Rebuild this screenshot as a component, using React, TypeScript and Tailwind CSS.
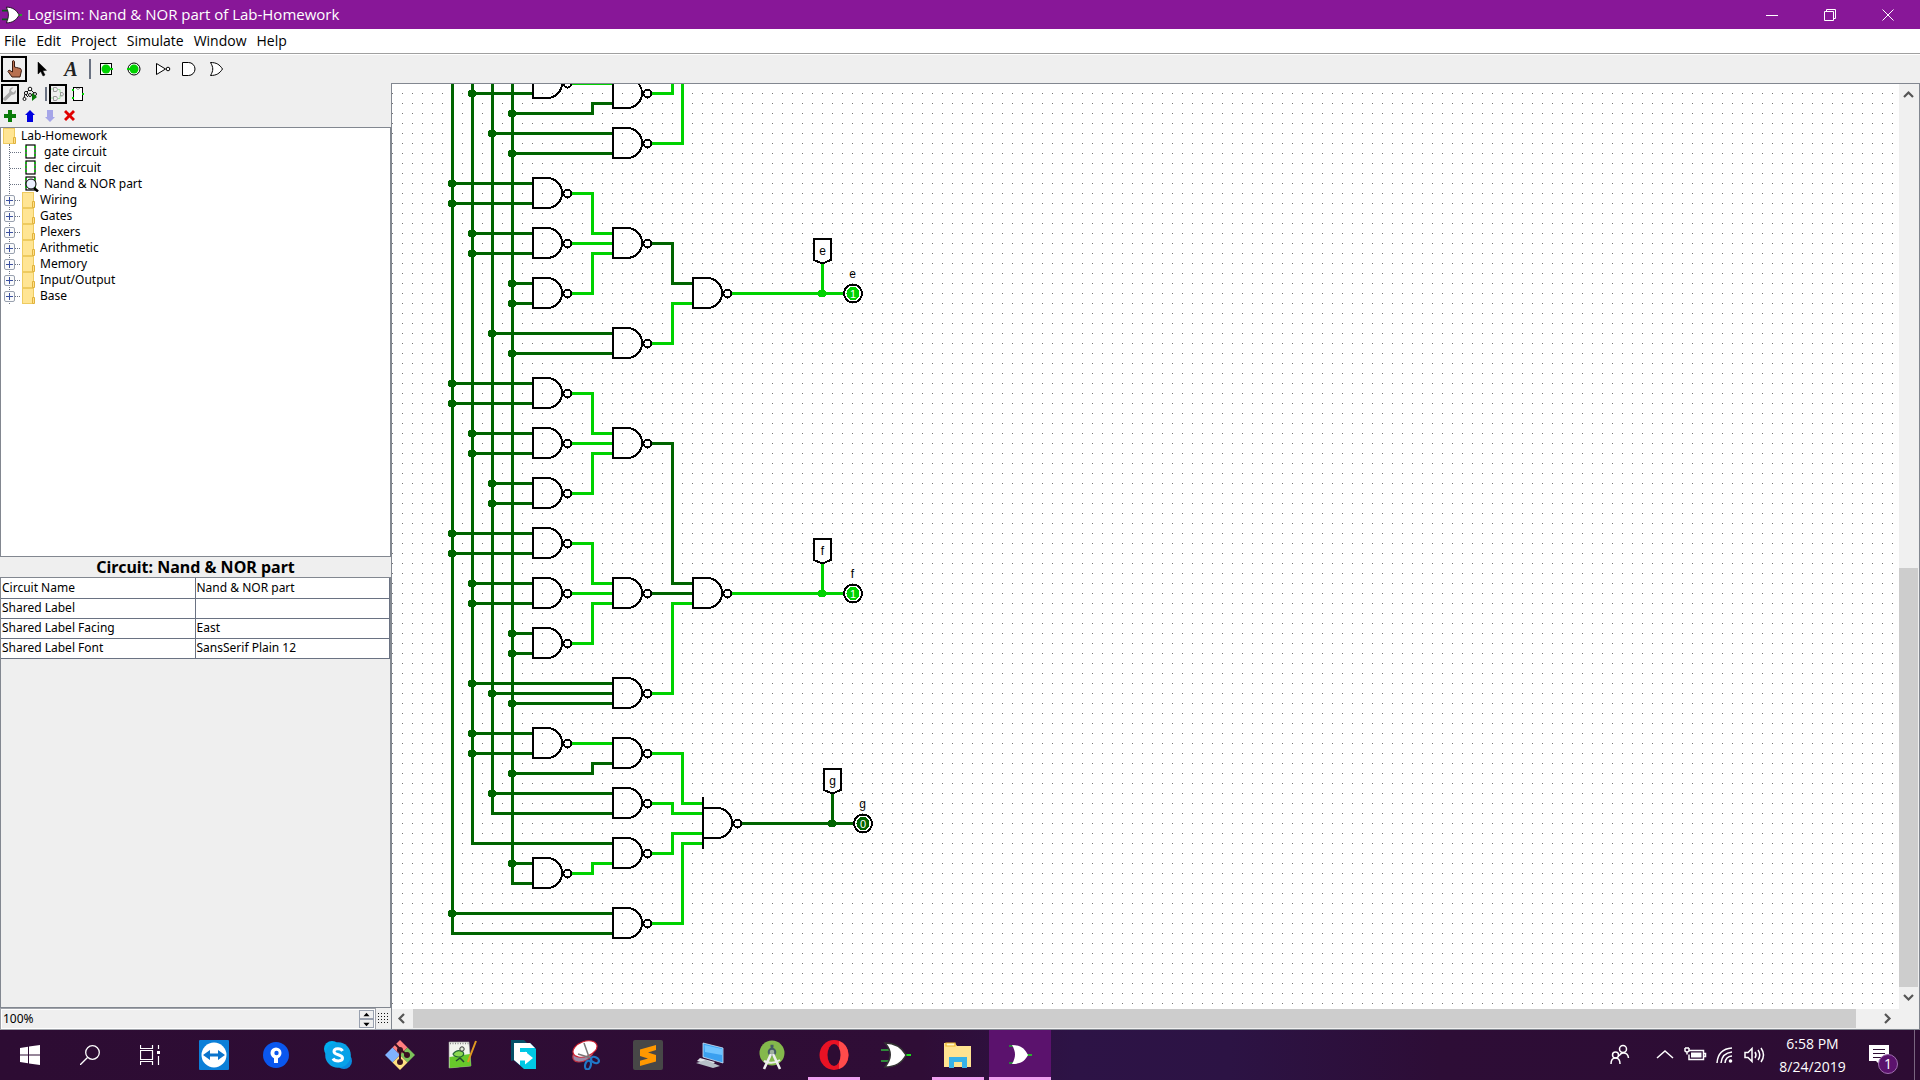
import React from "react";

type Gate = { x: number; y: number; tall?: boolean };

const DARK = "#006400";
const LIGHT = "#00d200";

const gates: Gate[] = [
  ...[83, 193, 243, 293, 393, 443, 493, 543, 593, 643, 743, 873].map((y) => ({ x: 533, y })),
  ...[93, 143, 243, 343, 443, 593, 693, 753, 803, 853, 923].map((y) => ({ x: 613, y })),
  { x: 693, y: 293 },
  { x: 693, y: 593 },
  { x: 703, y: 823, tall: true },
];

const taps: [number, number, number][] = [
  [472, 93, 532], [492, 133, 612], [512, 153, 612],
  [452, 183, 532], [452, 203, 532], [472, 233, 532], [472, 253, 532],
  [512, 283, 532], [512, 303, 532], [492, 333, 612], [512, 353, 612],
  [452, 383, 532], [452, 403, 532], [472, 433, 532], [472, 453, 532],
  [492, 483, 532], [492, 503, 532], [452, 533, 532], [452, 553, 532],
  [472, 583, 532], [472, 603, 532], [512, 633, 532], [512, 653, 532],
  [472, 683, 612], [492, 693, 612], [512, 703, 612],
  [472, 733, 532], [472, 753, 532], [492, 793, 612],
  [512, 863, 532], [452, 913, 612],
];

const darkWires = [
  "M452 70V933H612", "M472 70V843H612", "M492 70V813H612", "M512 70V883H532",
  "M512 113H592V103H612", "M512 773H592V763H612",
  "M652 243H672V283H692", "M652 443H672V583H692", "M652 593H692",
  "M742 823H853M832 823V793",
];

const lightWires = [
  "M572 83H612", "M652 93H672V70", "M652 143H682V70",
  "M572 193H592V233H612", "M572 243H612", "M572 293H592V253H612", "M652 343H672V303H692",
  "M732 293H843M822 293V263",
  "M572 393H592V433H612", "M572 443H612", "M572 493H592V453H612",
  "M572 543H592V583H612", "M572 593H612", "M572 643H592V603H612",
  "M652 693H672V603H692", "M732 593H843M822 593V563",
  "M572 743H612", "M652 753H682V803H702", "M652 803H672V813H702",
  "M652 853H672V833H702", "M652 923H682V843H702", "M572 873H592V863H612",
];

const outputs = [
  { x: 822, y: 293, name: "e", on: true },
  { x: 822, y: 593, name: "f", on: true },
  { x: 832, y: 823, name: "g", on: false },
];

function Circuit() {
  return (
    <svg className="block h-full w-full" role="img" aria-label="Nand & NOR part circuit" shapeRendering="crispEdges" fontFamily="'Liberation Sans', Arial, sans-serif">
      <defs>
        <pattern id="dots" x="0" y="9" width="10" height="10" patternUnits="userSpaceOnUse">
          <rect width="1" height="1" fill="#777777" />
        </pattern>
      </defs>
      <rect width="100%" height="100%" fill="url(#dots)" />
      <g transform="translate(-392 -84)">
        <g transform="translate(0.5 0.5)" fill="none" strokeWidth="3" strokeLinecap="square">
          <g stroke={DARK}>
            {darkWires.map((d) => <path key={d} d={d} />)}
            {taps.map(([x, y, to]) => <path key={`${x}-${y}`} d={`M${x} ${y}H${to}`} />)}
          </g>
          <g stroke={LIGHT}>
            {lightWires.map((d) => <path key={d} d={d} />)}
          </g>
        </g>
        <g fill={DARK}>
          {taps.map(([x, y]) => <circle key={`${x}-${y}`} cx={x} cy={y + 0.5} r="4" />)}
          <circle cx="512" cy="113.5" r="4" />
          <circle cx="512" cy="773.5" r="4" />
        </g>
        <g fill="none" stroke="#000" strokeWidth="2">
          {gates.map(({ x, y, tall }) => (
            <g key={`${x}-${y}`}>
              <path d={`M${x + 14} ${y - 15}H${x}V${y + 15}H${x + 14}A15 15 0 0 0 ${x + 14} ${y - 15}Z`} />
              {tall && <path d={`M${x} ${y - 26}V${y + 26}`} />}
              <circle cx={x + 34.5} cy={y + 0.5} r="4" fill="#fff" />
            </g>
          ))}
        </g>
        {outputs.map(({ x, y, name, on }) => (
          <g key={name}>
            <circle cx={x} cy={y + 0.5} r="4" fill={on ? LIGHT : DARK} />
            <path d={`M${x - 8} ${y - 54}H${x + 8.5}V${y - 33}L${x + 2} ${y - 30}H${x - 1}L${x - 8} ${y - 33}Z`} fill="#fff" stroke="#000" strokeWidth="2" />
            <text x={x + 0.5} y={y - 38} fontSize="12" textAnchor="middle">{name}</text>
            <text x={x + 30.5} y={y - 15} fontSize="12" textAnchor="middle">{name}</text>
            <circle cx={x + 31} cy={y + 0.5} r="9" fill="#fff" stroke="#000" strokeWidth="2" />
            <circle cx={x + 31} cy={y + 0.5} r="6.5" fill={on ? LIGHT : DARK} />
            <text x={x + 31} y={y + 5} fontSize="11" textAnchor="middle" fill="#fff">{on ? "1" : "0"}</text>
          </g>
        ))}
      </g>
    </svg>
  );
}

function Folder() {
  return (
    <svg className="block h-4 w-[14px] shrink-0" viewBox="0 0 14 16">
      <rect x="0.5" y="0.5" width="11" height="15" fill="#ffe594" stroke="#eecb60" />
      <path d="M10.5 9.5h2v6h-2z" fill="#ffe08a" stroke="#e0b23c" />
    </svg>
  );
}

function Chip({ current }: { current?: boolean }) {
  return (
    <svg className="block h-4 w-4 shrink-0" viewBox="0 0 16 16">
      <rect x="2" y="1" width="9" height="13" fill="#fff" stroke="#000" strokeWidth="1.2" />
      <path d="M1 3h2M1 7h2M1 11h2M10 3h2M10 7h2M10 11h2" stroke="#00c800" strokeWidth="1.4" />
      {current && (
        <>
          <circle cx="7" cy="8" r="5" fill="#eaf0ff" stroke="#000" />
          <path d="M10 12l4 3.5" stroke="#000" strokeWidth="2.5" />
        </>
      )}
    </svg>
  );
}

function OrIcon({ className }: { className: string }) {
  return (
    <svg className={className} viewBox="0 0 28 28">
      <path d="M0 8h9M0 20h9" stroke="#0a5a1a" strokeWidth="2.5" />
      <path d="M23 14h5" stroke="#00d200" strokeWidth="2" />
      <path d="M6 3c9 0 14 4 18 11-4 7-9 11-18 11 4-8 4-14 0-22z" fill="#fff" stroke="#111" strokeWidth="1.2" />
    </svg>
  );
}

const menus = ["File", "Edit", "Project", "Simulate", "Window", "Help"];
const circuits = ["gate circuit", "dec circuit", "Nand & NOR part"];
const libraries = ["Wiring", "Gates", "Plexers", "Arithmetic", "Memory", "Input/Output", "Base"];
const attributes = [
  ["Circuit Name", "Nand & NOR part"],
  ["Shared Label", ""],
  ["Shared Label Facing", "East"],
  ["Shared Label Font", "SansSerif Plain 12"],
];

const tools = [
  { name: "Edit tool", icon: <path d="M9 7v12l2.800-2.500 2.200 4.500 2-1-2.200-4.300 3.700-.4z" fill="#000" stroke="#000" strokeWidth=".5" /> },
  { name: "Text tool", icon: <text x="14" y="21" fontSize="20" fontWeight="bold" fontStyle="italic" textAnchor="middle" fontFamily="'Liberation Serif', serif" fill="#222">A</text> },
];

const gateTools = [
  { name: "Input pin", icon: <><rect x="8.500" y="8.500" width="11" height="11" fill="#fff" stroke="#000" /><circle cx="14" cy="14" r="4.500" fill={LIGHT} /><path d="M17 14h4" stroke={LIGHT} strokeWidth="2" /></> },
  { name: "Output pin", icon: <><circle cx="14" cy="14" r="6" fill="#fff" stroke="#000" /><circle cx="14" cy="14" r="4.500" fill={LIGHT} /><path d="M7 14h4" stroke={LIGHT} strokeWidth="2" /></> },
  { name: "NOT gate", icon: <><path d="M8.500 8.500v11l9-5.500z" fill="#fff" stroke="#000" /><circle cx="20" cy="14" r="1.800" fill="#fff" stroke="#000" /></> },
  { name: "AND gate", icon: <path d="M6.500 7.500h6a6.500 6.500 0 0 1 0 13h-6z" fill="#fff" stroke="#000" /> },
  { name: "OR gate", icon: <path d="M6.500 7.500c6 0 9 2 12 6.500-3 4.500-6 6.500-12 6.500 3-5 3-8 0-13z" fill="#fff" stroke="#000" /> },
];

function ToolButton({ name, children }: { name: string; children: React.ReactNode }) {
  return (
    <button aria-label={name} className="h-7 w-7 shrink-0">
      <svg className="block h-7 w-7" viewBox="0 0 28 28">{children}</svg>
    </button>
  );
}

function Explorer() {
  return (
    <aside className="flex w-[391px] shrink-0 flex-col pt-px text-[12px]">
      <div className="flex h-[21px] items-start pl-px">
        <button aria-label="Show toolbox" className="h-5 w-[18px] border-2 border-black">
          <svg className="block h-4 w-[14px]" viewBox="0 0 14 16"><path d="M2 13l6-6" stroke="#aaa" strokeWidth="3.500" strokeLinecap="round" /><path d="M13 4l-2.500 2.500-2-.5-.5-2L10.500 1.500C7 1 5.500 4 6.500 6.500l2 2c3 1 5-1.500 4.500-4.500z" fill="#aaa" /></svg>
        </button>
        <button aria-label="Show simulation tree" className="ml-[3px] h-5 w-4">
          <svg className="block h-5 w-4" viewBox="0 0 16 20"><g fill="#fff" stroke="#111"><path d="M8 5L3 10l-1 4M8 5l5 5M3 10l3 3" /><circle cx="8" cy="5" r="1.800" /><circle cx="4" cy="9" r="1.600" /><circle cx="2.500" cy="15" r="1.500" /><circle cx="8" cy="11" r="1.500" /><circle cx="13" cy="10" r="1.500" /></g><path d="M10 9v8l5-4z" fill="#087a08" /></svg>
        </button>
        <span className="mt-[3px] ml-[7px] h-[14px] w-[2px] bg-gray-500" />
        <button aria-label="Edit layout" className="ml-[2px] h-5 w-[18px] border-2 border-black">
          <svg className="block h-4 w-[14px]" viewBox="0 0 14 16" fill="none"><path d="M7 3.500h2v3h2M7 12.500h2v-3h2M0 3h3M0 12h3" stroke="#9be09b" /><path d="M2.500 1.500h3q2 2 0 4h-3zM2.500 10.500h3q2 2 0 4h-3zM9.500 6.500h2q2 1.500 0 3.500h-2z" stroke="#999" /></svg>
        </button>
        <button aria-label="Edit appearance" className="ml-[3px] h-5 w-4">
          <svg className="block h-5 w-4" viewBox="0 0 16 20"><rect x="3.500" y="3.500" width="9" height="13" fill="#fff" stroke="#000" /><path d="M6 4q2 3 4 0" fill="none" stroke="#888" /><path d="M2 6h2M2 14h2M12 10h2" stroke={LIGHT} strokeWidth="1.800" /></svg>
        </button>
      </div>
      <div className="flex h-[22px] items-center">
        {[
          { name: "Add circuit", d: "M8 4h4v4h4v4h-4v4H8v-4H4V8h4z", c: "#087a08" },
          { name: "Move circuit up", d: "M10 4l5 5h-2v7H7V9H5z", c: "#0000e0" },
          { name: "Move circuit down", d: "M10 16l5-5h-2V4H7v7H5z", c: "#a5a5e8" },
          { name: "Remove circuit", d: "M4 6l2-2 3.500 3.500L13 4l2 2-3.500 3.500L15 13l-2 2-3.500-3.500L6 15l-2-2 3.500-3.500z", c: "#e00000" },
        ].map((b) => (
          <button key={b.name} aria-label={b.name} className="h-5 w-5">
            <svg className="block h-5 w-5" viewBox="0 0 20 20"><path d={b.d} fill={b.c} /></svg>
          </button>
        ))}
      </div>

      <div className="flex-[429] basis-0 overflow-hidden border border-[#828790] bg-white">
        <div className="flex h-4 items-center pl-[2px]">
          <Folder />
          <span className="ml-1 leading-4">Lab-Homework</span>
        </div>
        <ul className="ml-2 border-l border-dotted border-gray-500">
          {circuits.map((c, i) => (
            <li key={c} className="flex h-4 items-center">
              <span className="w-[11px] border-t border-dotted border-gray-500" />
              <span className="ml-[3px]"><Chip current={i === 2} /></span>
              <span className="ml-1 leading-4">{c}</span>
            </li>
          ))}
          {libraries.map((l) => (
            <li key={l} className="flex h-4 items-center">
              <button aria-label={`Expand ${l}`} className="-ml-[6px] h-[11px] w-[11px] shrink-0 rounded-[2px] border border-gray-400 bg-gray-50">
                <svg className="block h-[9px] w-[9px]" viewBox="0 0 9 9"><path d="M1 4.500h7M4.500 1v7" stroke="#3a50a0" /></svg>
              </button>
              <span className="w-[5px] border-t border-dotted border-gray-500" />
              <span className="ml-[2px]"><Folder /></span>
              <span className="ml-1 leading-4">{l}</span>
            </li>
          ))}
        </ul>
      </div>

      <div className="flex flex-[452] basis-0 flex-col">
        <h2 className="h-5 text-center text-[16px] leading-5 font-bold">Circuit: Nand &amp; NOR part</h2>
        <div className="flex-1 border border-[#828790]">
          <table className="w-full table-fixed border-collapse bg-white">
            <tbody>
              {attributes.map(([k, v]) => (
                <tr key={k} className="h-5 border-b border-gray-500">
                  <th scope="row" className="w-[194px] border-r border-gray-500 p-0 pl-px text-left leading-[18px] font-normal">{k}</th>
                  <td className="border-r border-gray-500 p-0 pl-px leading-[18px]">{v}</td>
                </tr>
              ))}
            </tbody>
          </table>
        </div>
      </div>

      <div className="flex h-[22px] shrink-0">
        <div className="flex h-[22px] flex-1 border border-[#a0a3aa] bg-white p-px">
          <input aria-label="Zoom" defaultValue="100%" className="min-w-0 flex-1 bg-[#efefef] pl-px" />
          <div className="flex w-[15px] flex-col">
            {["M3.500 6h7L7 2z", "M3.500 3h7L7 7z"].map((d, i) => (
              <button key={d} aria-label={i ? "Zoom out" : "Zoom in"} className="flex-1 border border-gray-400 bg-[#efefef]">
                <svg className="block h-[7px] w-[13px]" viewBox="0 0 14 8"><path d={d} /></svg>
              </button>
            ))}
          </div>
        </div>
        <button aria-label="Show grid" className="w-[15px] border-b border-gray-400">
          <svg className="block h-[21px] w-[15px]" viewBox="0 0 15 21">
            <path d="M2 5.500h11M2 8.500h11M2 11.500h11M2 14.500h11" stroke="#111" strokeDasharray="1 2" />
          </svg>
        </button>
      </div>
    </aside>
  );
}

function ScrollArrow({ name, d }: { name: string; d: string }) {
  return (
    <button aria-label={name} className="h-5 w-5 shrink-0">
      <svg className="block h-5 w-5" viewBox="0 0 20 20" fill="none" stroke="#555" strokeWidth="2.200"><path d={d} /></svg>
    </button>
  );
}

function Canvas() {
  return (
    <main className="flex min-w-0 flex-1 flex-col border border-[#828790]">
      <div className="flex min-h-0 flex-1">
        <div className="min-w-0 flex-1 overflow-hidden bg-white"><Circuit /></div>
        <div className="flex w-5 flex-col bg-[#f0f0f0]">
          <ScrollArrow name="Scroll up" d="M5 13l4.500-4.500L14 13" />
          <div className="flex-[464]" />
          <div className="w-[19px] flex-[419] bg-[#cdcdcd]" />
          <div className="flex-[2]" />
          <ScrollArrow name="Scroll down" d="M5 6l4.500 4.500L14 6" />
        </div>
      </div>
      <div className="flex h-5 bg-[#f0f0f0]">
        <ScrollArrow name="Scroll left" d="M12 5L7.500 9.500L12 14" />
        <div className="ml-px h-[19px] flex-[1443] bg-[#cdcdcd]" />
        <div className="flex-[23]" />
        <ScrollArrow name="Scroll right" d="M6 5l4.500 4.500L6 14" />
        <div className="w-5" />
      </div>
    </main>
  );
}

const apps: { name: string; open?: boolean; active?: boolean; icon: React.ReactNode }[] = [
  { name: "TeamViewer", icon: <><rect width="30" height="30" rx="1" fill="#0b7fd8" /><circle cx="15" cy="15" r="12.500" fill="#fff" /><path d="M4 15l7-5v3.500h8V10l7 5-7 5v-3.500h-8V20z" fill="#0b74cc" /></> },
  { name: "Map pin", icon: <><circle cx="15" cy="15" r="13" fill="#0a57ee" /><circle cx="15" cy="13" r="5.500" fill="#fff" /><path d="M13 16h4v7h-4z" fill="#fff" /><circle cx="15.500" cy="13" r="2.200" fill="#0a57ee" /></> },
  { name: "Skype", icon: <><circle cx="9" cy="9" r="8" fill="#00aff0" /><circle cx="21" cy="21" r="8" fill="#0a8ade" /><circle cx="15" cy="15" r="12.800" fill="#08a2e8" /><path d="M19.500 11c-1.500-3-8.500-3-8.500.5 0 4 8.500 2.500 8.500 6.500 0 4-8 3.500-9.500.5" fill="none" stroke="#fff" strokeWidth="3" /></> },
  { name: "Git", icon: <><path d="M15 0l7.500 7.500L15 15 7.500 7.500z" fill="#ff7f7f" /><path d="M7.500 7.500L15 15l-7.500 7.500L0 15z" fill="#80b3ff" /><path d="M22.500 7.500L30 15l-7.500 7.500L15 15z" fill="#7cc35a" /><path d="M15 15l7.500 7.500L15 30l-7.500-7.500z" fill="#ffe080" /><path d="M10 4l5 5v13M15 9l7 6" stroke="#3a1020" strokeWidth="2" fill="none" /><circle cx="15" cy="10" r="3" fill="#3a1020" /><circle cx="22" cy="15" r="3" fill="#3a1020" /><circle cx="15" cy="22" r="3" fill="#3a1020" /></> },
  { name: "Notepad++", icon: <><path d="M2 2h20l2 24-22 2z" fill="#f2f4ee" stroke="#999" strokeWidth=".6" /><path d="M2.500 17l20.500-3 1 12-21.500 2z" fill="#67c92a" /><path d="M3 3.500h19" stroke="#888" strokeDasharray="1 1.500" strokeWidth="1.500" /><path d="M6 14c3-4 7-4 10-2 2 3-1 5-4 5-3 0-5-1-6-3z" fill="#8bd850" stroke="#263" strokeWidth="1.200" /><circle cx="15" cy="9" r="2.200" fill="#e0ead8" stroke="#333" /><path d="M9 21l4-3 4 4" stroke="#243" fill="none" strokeWidth="1.500" /><path d="M29 1l-7 18-1 3" stroke="#e09a20" strokeWidth="2" fill="none" /></> },
  { name: "File transfer", icon: <><path d="M2 0h13l6 6v10L2 21z" fill="#045068" /><path d="M5 3h16l6 6v20H15L5 20z" fill="#00c8e4" /><path d="M5 3h16l5 5H11v4h7v5h-7v8l-6-5z" fill="#fff" /><path d="M10 15.500h6v-4l8 6.500-8 6.500v-4h-6z" fill="#fff" /></> },
  { name: "Snipping Tool", icon: <><ellipse cx="12" cy="14" rx="11" ry="7" fill="#9a8ca8" stroke="#c03040" transform="rotate(-28 12 14)" /><ellipse cx="14" cy="9" rx="12.500" ry="7.500" fill="#fff" stroke="#d02030" strokeWidth="1.200" transform="rotate(-20 14 9)" /><path d="M13 3l5 14M7 14l13 4" stroke="#777" strokeWidth="1.500" /><ellipse cx="17" cy="25" rx="2.800" ry="4.500" fill="none" stroke="#2078c8" strokeWidth="2.200" transform="rotate(15 17 25)" /><ellipse cx="24" cy="20" rx="4.200" ry="2.800" fill="none" stroke="#2078c8" strokeWidth="2.200" transform="rotate(25 24 20)" /></> },
  { name: "Sublime Text", icon: <><rect width="30" height="30" rx="2" fill="#474747" /><path d="M23 5L7 9.500V16l8 2.500-8 2.300V26l16-4.500V15l-8-2.500L23 10z" fill="#ff9800" /></> },
  { name: "Remote Desktop", icon: <><path d="M8 3l20 5v15L8 17z" fill="#3aa0f0" stroke="#cfe6fa" strokeWidth=".8" /><path d="M9.500 5L27 9v6L10 12z" fill="#70c4ff" /><path d="M5 18l15 4-3 3-15-4z" fill="#dfe4e8" /><path d="M1 23l17 5 7-2-14-6z" fill="#b8c0c8" /></> },
  { name: "Android Studio", icon: <><circle cx="15" cy="13" r="12.500" fill="#84b84c" /><path d="M15 5v6M13.500 6h3" stroke="#455a64" strokeWidth="2.500" /><circle cx="15" cy="12" r="3.300" fill="#9fb0a0" stroke="#455a64" strokeWidth="2" /><path d="M14 14L7 29M16 14l7 15" stroke="#eee" strokeWidth="2.600" /><path d="M7 21q8 4 16-1" fill="none" stroke="#eee" strokeWidth="2" /></> },
  { name: "Opera", open: true, icon: <><ellipse cx="15" cy="15" rx="14.500" ry="15" fill="#e81224" /><path d="M20 1q9 3 9.500 14-.5 11-9.500 14z" fill="#ff4b4b" /><ellipse cx="15" cy="15" rx="6.500" ry="11" fill="#2d0c33" /></> },
  { name: "Logisim shortcut", icon: <><path d="M0 10h10M0 21h10" stroke="#2f8a3a" strokeWidth="1.800" /><path d="M24 15h6" stroke="#1be01b" strokeWidth="2" /><path d="M4 3c11 0 17 5 21 12-4 8-10 12-21 12 7-9 7-16 0-24z" fill="#fff" stroke="#333" strokeWidth="1.500" /></> },
  { name: "File Explorer", open: true, icon: <><path d="M1 3h11l2 3h14v21H1z" fill="#ffe391" /><path d="M3 3h9v3H3z" fill="#fff4c8" stroke="#f0b72c" strokeWidth="1.200" /><path d="M6 28V17h18v11h-5v-6h-8v6z" fill="#38b2e8" /></> },
  { name: "Logisim", open: true, active: true, icon: <><path d="M4 6h4M4 23h4" stroke="#20a030" strokeWidth="1.500" /><path d="M22 15h5" stroke="#1be01b" strokeWidth="1.500" /><path d="M7 5c9 0 13 4 16 10-3 6-7 9-16 9 4-7 4-12 0-19z" fill="#fff" /></> },
];

function TrayIcon({ name, className, children }: { name: string; className: string; children: React.ReactNode }) {
  return (
    <button aria-label={name} className={className}>
      <svg className="mx-auto block h-6 w-6" viewBox="0 0 24 24" fill="none" stroke="#fff" strokeWidth="1.500">{children}</svg>
    </button>
  );
}

function Taskbar() {
  return (
    <footer className="flex h-[50px] shrink-0 items-stretch bg-[linear-gradient(90deg,#2d0c33_0%,#2f0d36_48%,#2d1346_56%,#2c1344_64%,#2d0d36_75%,#2d0c33_100%)] font-['Open_Sans',sans-serif] text-white">
      <button aria-label="Start" className="w-[60px]">
        <svg className="mx-auto block h-5 w-5" viewBox="0 0 20 20" fill="#fff"><path d="M0 3l8-1.200V9.500H0zM9 1.600L20 0v9.500H9zM0 10.500h8v7.700L0 17zM9 10.500h11V20L9 18.400z" /></svg>
      </button>
      <button aria-label="Search" className="w-[60px]">
        <svg className="mx-auto block h-5 w-5" viewBox="0 0 20 20" fill="none" stroke="#fff" strokeWidth="1.300"><circle cx="12.500" cy="7.500" r="6.800" /><path d="M7.500 12.500L0 20" /></svg>
      </button>
      <button aria-label="Task View" className="mr-[3px] w-[60px]">
        <svg className="mx-auto block h-5 w-5" viewBox="0 0 20 20" fill="none" stroke="#fff"><path d="M.5 0v3.500h12V0M.5 20v-3.500h12V20M.5 5.500h12v9H.5zM18.500 0v4M18.500 11v9" strokeWidth="1.200" /><path d="M17 6h3v3h-3z" fill="#fff" stroke="none" /></svg>
      </button>
      {apps.map((a) => (
        <button key={a.name} aria-label={a.name} className={a.active ? "relative w-[62px] bg-[#5b126d]" : "relative w-[62px]"}>
          <svg className="mx-auto block h-[30px] w-[30px]" viewBox="0 0 30 30">{a.icon}</svg>
          {a.open && <span className={a.active ? "absolute inset-x-0 bottom-0 h-[3px] bg-[#f0a0f0]" : "absolute inset-x-[5px] bottom-0 h-[3px] bg-[#f0a0f0]"} />}
        </button>
      ))}
      <div className="ml-auto flex items-center">
        <TrayIcon name="People" className="mr-[15px] w-[30px]"><circle cx="15" cy="6" r="3.500" /><circle cx="7.500" cy="12" r="3" /><path d="M3 21q0-6 4.500-6t4.500 6M11 13q2-3.500 4.500-3 4.500 0 5 5" /></TrayIcon>
        <TrayIcon name="Show hidden icons" className="w-[30px]"><path d="M4 15l8-7 8 7" /></TrayIcon>
        <TrayIcon name="Battery" className="w-[30px]"><path d="M6 7.500h14.500v9H6v-5M21 10.500h1.500v3H21" /><path d="M8 9.500h10.500v5H8z" fill="#fff" stroke="none" /><path d="M2 5v3q2 2 4 0V5M4 9v2.500M2 5h4" /></TrayIcon>
        <TrayIcon name="Wi-Fi" className="w-[30px]"><path d="M4 20Q5 6 19 5M8 20q1-10 11-11M12 20q.5-6.500 7-7" /><circle cx="17.500" cy="18" r="1.800" fill="#fff" stroke="none" /></TrayIcon>
        <TrayIcon name="Volume" className="w-[30px]"><path d="M2 9.500h3l4-4v13l-4-4H2zM12 9q2 3 0 6M15 7q3.500 5 0 10M18 5q5 7 0 14" /></TrayIcon>
        <button className="w-[85px] text-center text-[14px] leading-[23px]">6:58 PM<br />8/24/2019</button>
        <button aria-label="Notifications, 1 new" className="relative h-[50px] w-[59px]">
          <svg className="absolute top-[15px] left-[14px] block h-5 w-5" viewBox="0 0 20 20"><path d="M0 0h20v16h-9v4l-4-4H0z" fill="#fff" /><path d="M4 4.500h12M4 8.500h12M4 12.500h8" stroke="#2d0c33" /></svg>
          <span className="absolute top-6 left-[23px] h-5 w-5 rounded-full border border-[#a070b0] bg-[#5b126d] text-[14px] leading-[18px]">1</span>
        </button>
        <span className="mr-[5px] h-[50px] w-px bg-[#7a6580]" />
      </div>
    </footer>
  );
}

export default function App() {
  return (
    <div className="flex h-screen flex-col overflow-hidden bg-[#efefef] font-['Noto_Sans',sans-serif] text-black">
      <header className="flex h-[29px] shrink-0 items-center bg-[#881798] font-['Open_Sans',sans-serif] text-white">
        <OrIcon className="ml-[2px] h-5 w-5" />
        <h1 className="ml-[5px] text-[15px]">Logisim: Nand &amp; NOR part of Lab-Homework</h1>
        <div className="mr-[3px] ml-auto flex">
          {[
            { name: "Minimize", d: "M0 6.500h12" },
            { name: "Restore", d: "M.5 2.500h9v9h-9zM2.500 2.500v-2h9v9h-2" },
            { name: "Close", d: "M.5 .5l11 11M11.500 .5l-11 11" },
          ].map((b) => (
            <button key={b.name} aria-label={b.name} className="flex h-[29px] w-[58px] items-center justify-center">
              <svg className="block h-3 w-3" viewBox="0 0 12 12" fill="none" stroke="#fff"><path d={b.d} /></svg>
            </button>
          ))}
        </div>
      </header>
      <nav className="h-[26px] shrink-0 border-b border-white bg-white font-['Open_Sans',sans-serif]">
        <div className="flex h-[25px] gap-[10px] border-b border-[#a0a0a0] pl-1 text-[14px] leading-6">
          {menus.map((m) => <button key={m}>{m}</button>)}
        </div>
      </nav>
      <div className="flex h-7 shrink-0 items-center pl-px">
        <button aria-label="Poke tool" className="mr-[2px] h-[26px] w-[26px] border-2 border-black">
          <svg className="block h-[22px] w-[22px]" viewBox="0 0 22 22">
            <path d="M9.500 3q1.500-1 2 .5V9l2 .5 2 .5 2 .5 1 2-1.500 6.500h-8L5 13.500l1-1.500 3.500 2z" fill="#b87050" stroke="#3a1a10" />
          </svg>
        </button>
        {tools.map((t) => <ToolButton key={t.name} name={t.name}>{t.icon}</ToolButton>)}
        <span className="mr-px ml-1 h-5 w-[2px] bg-gray-500" />
        {gateTools.map((t) => <ToolButton key={t.name} name={t.name}>{t.icon}</ToolButton>)}
      </div>
      <div className="flex min-h-0 flex-1">
        <Explorer />
        <Canvas />
      </div>
      <Taskbar />
    </div>
  );
}
